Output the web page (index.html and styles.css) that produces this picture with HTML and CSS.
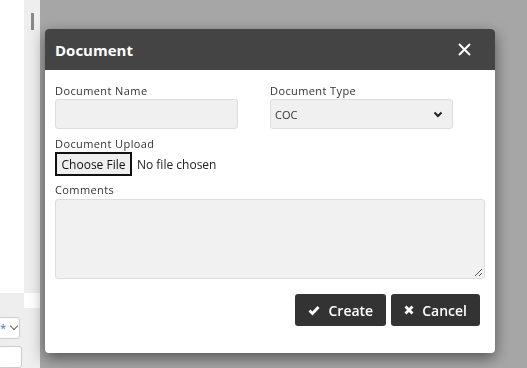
FILE: index.html
```html
<!DOCTYPE html>
<html lang="en">
<head>
  <meta charset="UTF-8">
  <title>Document</title>
  <link rel="stylesheet" href="styles.css">
</head>
<body>
  <div class="page">
    <aside class="side">
      <div class="side-top">
        <div class="side-white"></div>
        <div class="side-rail"><span class="thumb"></span></div>
      </div>
      <div class="side-mid">
        <div class="side-rail-alt"></div>
        <div class="side-white-alt"></div>
      </div>
      <div class="side-bottom">
        <div class="mini-select"><span class="star">*</span><span class="chev"></span></div>
        <div class="mini-input"></div>
      </div>
    </aside>
    <main class="content"></main>
  </div>

  <!-- modal over the page -->
  <div class="backdrop">
    <div class="modal">
      <div class="modal-header">
        <h2>Document</h2>
        <span class="close-btn">
          <svg width="13" height="13" viewBox="0 0 13 13"><path d="M1 1 L12 12 M12 1 L1 12" stroke="#fff" stroke-width="2"/></svg>
        </span>
      </div>
      <div class="modal-body">
        <div class="row">
          <div class="field">
            <label>Document Name</label>
            <input type="text" class="control">
          </div>
          <div class="field">
            <label>Document Type</label>
            <div class="control select">
              <span>COC</span>
              <svg width="10" height="7" viewBox="0 0 10 7"><path d="M1.5 1.5 L5 5 L8.5 1.5" fill="none" stroke="#222" stroke-width="2"/></svg>
            </div>
          </div>
        </div>
        <label>Document Upload</label>
        <div class="upload">
          <span class="file-btn">Choose File</span>
          <span class="file-text">No file chosen</span>
        </div>
        <label>Comments</label>
        <div class="textarea">
          <svg class="grip" width="8" height="8" viewBox="0 0 8 8"><path d="M8 1 L1 8 M8 5 L5 8" stroke="#555" stroke-width="1"/></svg>
        </div>
      </div>
      <div class="modal-footer">
        <button class="btn">
          <svg width="12" height="11" viewBox="0 0 12 11"><path d="M1.5 5.5 L4.5 8.5 L10.5 2" fill="none" stroke="#fff" stroke-width="2.8"/></svg>
          Create
        </button>
        <button class="btn">
          <svg width="10" height="10" viewBox="0 0 10 10"><path d="M1.5 1.5 L8.5 8.5 M8.5 1.5 L1.5 8.5" stroke="#fff" stroke-width="2.8"/></svg>
          Cancel
        </button>
      </div>
    </div>
  </div>
</body>
</html>
```

FILE: styles.css
```css
body {
  margin: 0;
  font-family: "Open Sans", "DejaVu Sans", sans-serif;
  color: #333;
  background: #fff;
  overflow: hidden;
}
.page {
  display: flex;
  height: 368px;
}
.side {
  width: 40px;
  display: flex;
  flex-direction: column;
  background: #eee;
}
.side-top {
  height: 302px;
  display: flex;
}
.side-white {
  width: 24px;
  background: #fff;
}
.side-rail {
  width: 16px;
  background: #eee;
  padding: 13px 0 0 7px;
  box-sizing: border-box;
}
.thumb {
  display: block;
  width: 3px;
  height: 17px;
  background: #888;
}
.side-mid {
  height: 16px;
  display: flex;
}
.side-rail-alt {
  width: 24px;
  background: #eee;
}
.side-white-alt {
  width: 16px;
  background: #fff;
}
.side-bottom {
  padding-top: 9px;
}
.mini-select {
  width: 22px;
  height: 22px;
  margin-left: -2px;
  background: #fff;
  border: 1px solid #ccc;
  border-radius: 3px;
  box-sizing: border-box;
  position: relative;
}
.star {
  position: absolute;
  left: 1px;
  top: 2px;
  font-size: 11px;
  color: #4a6fd0;
}
.chev {
  position: absolute;
  left: 12px;
  top: 5px;
  width: 5px;
  height: 5px;
  border-right: 1px solid #666;
  border-bottom: 1px solid #666;
  transform: rotate(45deg);
}
.mini-input {
  width: 22px;
  height: 20px;
  margin: 7px 0 0 -2px;
  background: #fff;
  border: 1px solid #ccc;
  border-radius: 3px;
}
.content {
  flex: 1;
  background: #fff;
}

.backdrop {
  position: fixed;
  top: 0;
  left: 40px;
  right: 0;
  bottom: 0;
  background: rgba(0, 0, 0, 0.35);
  padding: 29px 0 0 5px;
}
.modal {
  width: 450px;
  height: 324px;
  background: #fff;
  border-radius: 4px;
  box-shadow: 0 5px 15px rgba(0, 0, 0, 0.5);
  overflow: hidden;
  display: flex;
  flex-direction: column;
}
.modal-header {
  height: 41px;
  background: #444;
  display: flex;
  align-items: center;
  justify-content: space-between;
  padding: 0 24px 0 10px;
}
.modal-header h2 {
  margin: 0;
  color: #fff;
  font-size: 15px;
  font-weight: 700;
}
.close-btn {
  display: flex;
}
.modal-body {
  padding: 13px 10px 0 10px;
}
.row {
  display: flex;
  gap: 32px;
}
.field {
  display: flex;
  flex-direction: column;
}
label {
  display: block;
  font-size: 11px;
  letter-spacing: 0.4px;
  color: #333;
  line-height: 15px;
  margin-bottom: 1px;
}
.control {
  width: 183px;
  height: 30px;
  box-sizing: border-box;
  background: #f0f0f0;
  border: 1px solid #ddd;
  border-radius: 3px;
  margin: 0;
}
.select {
  display: flex;
  align-items: center;
  justify-content: space-between;
  padding: 0 9px 0 4px;
  font-size: 11px;
  color: #333;
}
.row + label {
  margin-top: 7px;
}
.upload {
  display: flex;
  align-items: center;
  gap: 5px;
  margin: 0 0 6px;
  font-size: 12px;
}
.file-btn {
  width: 77px;
  height: 24px;
  box-sizing: border-box;
  border: 2px solid #111;
  background: #efefef;
  display: flex;
  align-items: center;
  justify-content: center;
  color: #111;
}
.file-text {
  color: #222;
}
.textarea {
  width: 430px;
  height: 80px;
  margin-top: 2px;
  box-sizing: border-box;
  background: #f1f1f1;
  border: 1px solid #ddd;
  border-radius: 3px;
  position: relative;
}
.grip {
  position: absolute;
  right: 2px;
  bottom: 2px;
}
.modal-footer {
  display: flex;
  justify-content: flex-end;
  gap: 5px;
  padding: 15px 15px 0 0;
}
.btn {
  height: 32px;
  border: 0;
  border-radius: 3px;
  background: #333;
  color: #fff;
  font-family: "Open Sans", sans-serif;
  font-size: 14px;
  font-weight: 600;
  display: flex;
  align-items: center;
  gap: 8px;
  padding: 0 13px;
}
```
